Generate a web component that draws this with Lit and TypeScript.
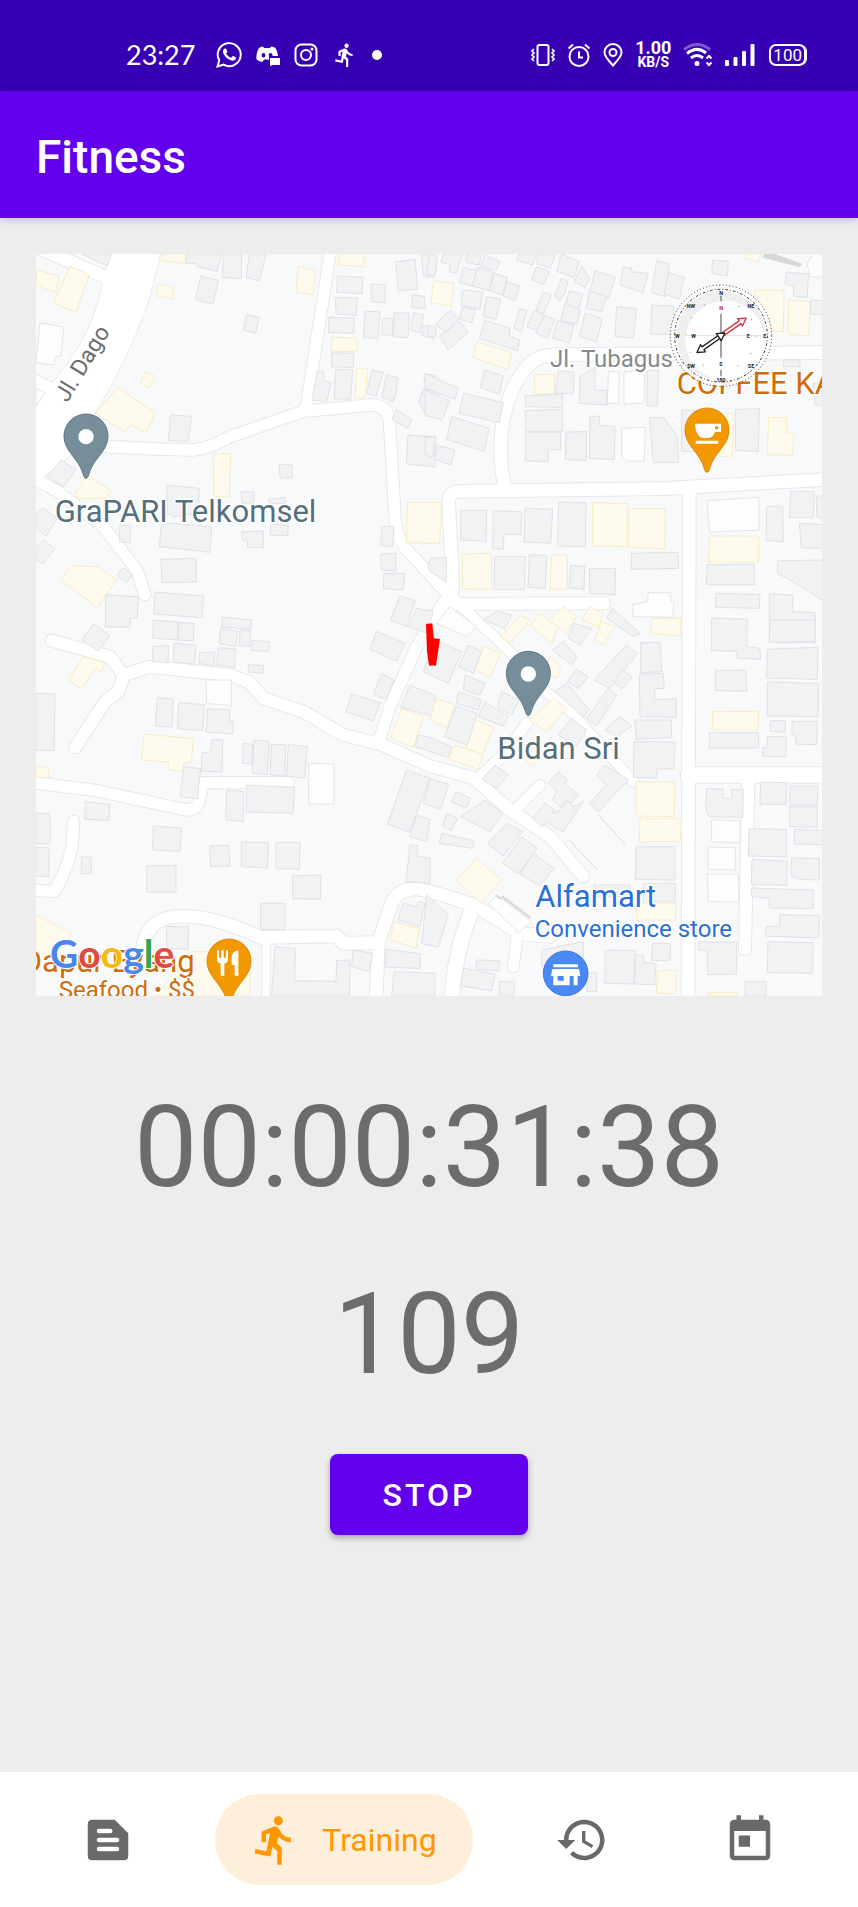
import { LitElement, html, css, svg } from "lit";
import { customElement, property } from "lit/decorators.js";

type Kind = "g" | "y" | "w" | "d";
type Block = { x: number; y: number; shapes: Partial<Record<Kind, string>> };

/* Building footprints by map quadrant; shapes of one kind are separated by "/". */
const BLOCKS: Block[] = [
  {
    x: 0, y: 0,
    shapes: {
      y: `20,60 88,78 76,128 18,105/120,48 178,75 138,186 70,160/395,12 470,12 465,40 398,32/382,102 430,110 428,146 380,138/
        805,50 858,62 848,135 798,125/928,12 1006,12 1000,50 925,44/905,262 980,264 980,304 904,304/980,355 1013,357 1005,443 975,442/
        1132,757 1234,757 1229,880 1129,878/345,365 374,378 358,414 332,400/265,412 376,490 348,548 305,524 285,545 195,490/
        550,612 602,612 598,740 552,740/170,675 245,722 225,745 150,745 132,738/125,948 205,950 258,990 232,1030 202,1072 92,990`,
      g: `155,12 245,12 232,48/470,12 575,12 560,64 500,48 498,40 468,40/580,12 635,12 634,86 577,82/658,12 708,12 688,93 648,82/
        512,78 566,92 548,163 497,148/650,193 687,203 677,250 640,240/922,78 998,82 997,131 920,127/1023,102 1065,104 1066,158 1024,155/
        1098,36 1155,28 1163,118 1104,122/1175,12 1210,12 1210,82 1180,80/1148,134 1184,140 1186,176 1145,172/917,142 982,144 978,196 918,192/
        897,202 973,204 971,250 895,248/1005,183 1050,186 1044,266 1001,262/1057,206 1090,206 1088,256 1056,254/1092,188 1138,190 1134,263 1090,260/
        1152,188 1182,196 1170,248 1142,240/1180,226 1215,232 1210,266 1176,256/905,308 972,310 970,352 904,350/
        862,363 880,366 882,392 904,398 890,456 846,450/917,358 968,360 962,448 912,446/1026,360 1060,368 1038,438 1010,430/
        1070,373 1105,384 1098,415 1102,420 1090,455 1055,442/1190,372 1215,376 1215,410 1180,396/1180,416 1215,425 1215,500 1190,498 1166,455/
        1100,478 1146,510 1132,535 1085,508/1134,555 1215,560 1215,650 1129,642/422,495 484,499 474,575 415,571/748,643 786,643 786,684 750,684/
        94,630 138,660 100,710 50,678/410,706 508,715 505,790 430,800 412,790/633,725 672,725 670,760 636,760/715,748 765,742 768,760 720,760/
        395,818 545,830 540,907 388,890/722,822 775,826 773,857 720,855/636,845 700,843 700,893 653,892 652,872 636,868/
        270,825 302,827 300,878 268,875/40,775 82,805 48,858 18,835 18,790/40,868 74,896 38,942 18,930 18,892/280,953 308,975 290,998 260,978/
        393,928 498,925 498,996 396,997/227,1035 325,1040 322,1104 302,1104 300,1132 226,1130/375,1026 521,1038 517,1103 372,1092/
        1055,828 1092,830 1088,890 1052,886/1052,912 1098,910 1097,963 1054,960/1062,970 1124,970 1120,1020 1060,1016/
        1110,1038 1156,1052 1130,1130 1082,1110/1160,1075 1210,1085 1190,1150 1135,1130`,
      w: `30,218 102,232 92,318 78,320 70,345 18,338/18,415 45,428 18,470`,
    },
  },
  {
    x: 1200, y: 0,
    shapes: {
      y: `12,92 72,100 62,168 2,158/142,275 244,308 232,358 128,322/945,12 992,12 985,36 940,24/975,120 1062,122 1060,245 975,240/
        1075,150 1140,155 1136,258 1075,252/313,374 374,374 372,432 315,432/865,490 910,490 908,618 870,620/
        1016,502 1070,504 1070,550 1092,552 1088,616 1012,614/488,758 592,760 590,890 488,888/598,776 706,776 704,896 595,892/
        97,912 185,910 184,1018 98,1016/364,915 412,916 412,1018 360,1016/838,858 986,858 986,936 836,936/
        270,1095 300,1110 240,1180 212,1160/330,1090 385,1130 365,1180 300,1125/400,1070 440,1100 410,1150 355,1110/
        480,1070 520,1090 505,1130 455,1110/515,1115 555,1130 520,1185 495,1170/665,1105 752,1106 752,1158 662,1150`,
      g: `40,12 98,12 88,40 80,70 58,65 60,45 32,36/0,12 22,18 15,78 -12,74/110,12 155,12 148,45 108,36/165,15 210,35 198,60 152,50/
        268,12 320,12 308,45 258,30/100,52 140,62 128,108 88,98/142,52 190,65 178,122 128,108/192,70 232,82 218,135 178,122/
        230,95 270,108 255,152 220,138/325,12 378,12 360,55 320,40/320,50 358,65 340,104 305,88/395,12 448,35 432,82 380,64/
        455,50 480,85 465,112 432,95/395,85 413,95 405,130 388,152 374,138/98,120 158,126 150,178 92,165/170,140 212,148 198,208 158,198/
        98,170 138,180 125,218 88,208/62,180 88,208 45,245 16,222/90,215 115,245 55,300 28,258/-5,226 18,232 15,262 -8,258/
        340,126 365,135 340,192 318,180/418,122 458,132 445,180 405,168/405,160 452,180 440,222 392,212/382,212 432,225 418,278 368,265/
        338,195 375,208 352,265 318,250/312,180 345,195 318,240 290,230/268,176 290,182 275,245 252,235/495,62 556,82 535,145 480,125/
        478,122 530,140 515,185 468,175/465,190 517,205 500,275 448,260/165,210 240,235 238,258 270,270 262,302 148,265/
        580,50 605,55 602,65 655,70 638,128 570,105/680,32 718,42 705,140 665,128/715,68 762,82 748,148 703,132/560,170 620,176 610,264 555,260/
        665,165 730,168 735,255 662,252/848,30 895,34 892,78 845,70/1068,66 1135,72 1132,142 1092,140 1090,108 1066,102/
        1142,150 1180,152 1180,195 1142,192/165,360 220,378 208,432 150,412/100,430 220,458 208,518 88,490/65,500 178,535 162,604 50,568/
        -15,370 85,415 75,448 -15,415/-15,420 60,452 35,510 -15,495/-15,560 18,562 8,622 -15,615/22,586 75,600 62,645 14,628/
        385,362 432,366 430,430 375,430/286,438 398,432 398,472 286,470/286,482 398,478 398,545 286,545/
        286,547 392,547 392,598 355,600 355,635 286,633/450,380 495,352 495,420 530,422 530,465 448,460/652,362 686,360 682,468 650,468/
        408,546 470,545 468,632 406,628/480,500 508,498 508,526 555,530 553,628 478,626/658,502 700,502 742,560 746,638 670,638/
        755,480 830,485 820,605 755,604/917,478 988,476 985,604 916,602/92,782 170,780 168,874 92,870/
        190,782 275,786 273,854 222,852 220,898 188,896/285,774 368,778 362,880 282,876/386,756 468,758 466,890 382,888/
        194,920 286,920 284,1018 192,1018/298,914 350,916 346,1015 294,1012/422,945 464,950 462,1018 418,1014/478,955 557,956 555,1034 480,1032/
        604,910 745,907 745,955 604,958/832,944 973,943 973,1004 828,1004/1082,724 1152,724 1150,802 1078,802/
        1010,770 1058,770 1060,875 1008,872/1160,738 1180,738 1180,808 1160,800/1108,820 1180,824 1180,895 1114,893/
        1042,932 1180,930 1180,1052 1080,990 1042,970/858,1030 990,1034 988,1075 856,1072/1018,1032 1088,1035 1088,1085 1156,1088 1156,1178 1018,1176/
        0,925 50,922 48,996 -5,960/845,1105 952,1107 950,1190 990,1195 992,1228 922,1225 920,1204 845,1202/
        200,1085 245,1095 225,1135 160,1110/545,1075 630,1150 610,1160 530,1105/1060,330 1110,330 1110,350 1060,350/1150,400 1180,400 1180,465 1155,465`,
      w: `1150,12 1180,12 1180,82 1140,80 1130,40/535,365 568,365 566,462 532,460/582,365 645,362 642,460 582,462/
        575,535 646,532 643,633 590,634 575,620/832,752 986,742 988,840 838,846/
        655,1028 722,1028 722,1055 732,1058 728,1102 610,1100 606,1065 652,1055/60,1070 140,1130 110,1160 20,1120`,
      d: `1002,12 1030,12 1115,42 1108,50 1000,22`,
    },
  },
  {
    x: 0, y: 1110,
    shapes: {
      y: `160,110 225,128 215,155 195,148 155,206 115,180/18,438 55,442 55,474 18,472/
        343,342 490,356 484,425 462,430 460,456 416,448 415,426 334,420/18,885 125,940 110,975 18,1040/480,995 660,995 660,1128 380,1128/
        1092,905 1168,925 1158,985 1080,960/1115,265 1180,290 1150,382 1082,355`,
      g: `192,10 240,48 205,92 155,60/18,220 75,222 72,392 18,390/370,0 445,6 443,60 368,54/447,8 492,10 490,62 443,60/577,-8 665,0 662,28 575,20/
        572,24 622,34 618,80 568,70/630,30 662,32 660,80 628,76/668,60 718,66 715,95 664,90/368,80 416,76 414,128 368,124/
        432,70 498,76 494,132 430,126/508,98 554,96 552,138 506,130/566,84 616,86 614,142 560,136/656,134 700,136 700,160 654,156/
        382,233 430,238 426,322 376,318/446,248 523,254 518,332 443,326/533,266 600,270 598,302 610,304 608,342 528,336/
        545,358 578,360 576,456 514,454 516,398 542,396/462,440 512,446 502,536 450,530/640,370 668,374 664,432 638,430/
        672,360 718,364 712,464 666,460/725,373 767,374 764,468 720,464/775,374 832,380 824,474 770,468/650,495 793,502 790,580 648,576/
        590,510 640,515 640,606 588,600/166,545 240,553 236,602 164,598/18,580 58,580 62,628 60,672 18,670/18,682 58,684 56,770 18,768/
        154,710 184,712 184,762 154,760/370,618 455,624 450,694 368,690/350,738 438,736 438,816 350,816/540,678 596,676 600,738 542,740/
        634,666 715,668 712,744 634,740/738,668 810,668 808,748 738,746/788,768 872,764 872,838 788,836/692,850 766,850 766,930 692,928/
        410,920 476,920 474,988 410,986/735,980 796,985 794,1082 918,1084 920,1022 960,1020 958,1128 725,1128/970,990 1028,1000 1018,1055 965,1040/
        1120,850 1160,860 1165,845 1185,850 1170,920 1104,900/1068,988 1172,1002 1170,1045 1066,1042/1092,1055 1215,1060 1215,1128 1085,1128/
        1040,34 1125,70 1100,124 1020,88/1055,160 1092,180 1070,240 1030,222/965,222 1050,248 1030,302 948,276/
        1140,196 1215,225 1215,290 1112,262/1165,345 1200,352 1265,380 1255,412 1155,380/1130,450 1200,475 1138,636 1072,612/
        1160,585 1200,598 1190,665 1138,650/1140,675 1162,676 1162,708 1200,715 1200,790 1128,786/1200,476 1256,492 1232,568 1180,550/
        1190,825 1255,885 1225,982 1175,970`,
      w: `528,180 604,180 604,257 530,250/836,430 912,432 912,553 836,552`,
    },
  },
  {
    x: 1200, y: 1110,
    shapes: {
      y: `160,78 212,100 180,172 135,150/18,235 75,255 50,325 0,300/130,298 190,320 158,405 106,380/75,375 158,405 145,448 58,418/
        370,235 410,265 350,335 298,300/280,400 330,420 300,440/617,486 735,486 732,590 617,588/630,596 755,596 752,664 628,666/
        620,850 738,850 736,900 620,900/848,275 986,274 984,330 848,330/682,1052 738,1052 738,1120 680,1120/140,715 215,780 152,850 80,780/
        360,110 392,140 380,175 345,160/835,1118 920,1118 920,1128 835,1128`,
      g: `15,60 95,95 55,190 -20,155/115,75 155,95 130,160 85,140/105,165 165,190 150,225 100,210/85,215 155,240 145,270 80,250/
        78,258 142,280 112,375 44,350/215,215 268,240 245,285 202,262/165,245 235,290 220,318 145,290/400,65 440,110 425,135 368,90/
        430,10 485,25 450,75 415,55/590,75 622,100 540,205 492,180/440,148 475,170 445,205 412,185/580,150 606,172 575,208 550,185/
        410,190 478,270 460,292 375,215/535,205 560,225 500,318 470,295/425,295 470,330 440,380 385,345/568,290 605,318 560,350 525,330/
        195,435 235,465 200,505 155,478/385,455 412,480 405,490 445,525 400,570 368,540 380,515 355,490/
        345,550 375,570 365,580 392,570 410,540 432,560 460,545 400,635 352,610 335,620 308,595/525,435 595,480 505,575 478,550 530,495 500,465/
        632,68 692,68 695,155 632,158/628,162 700,160 702,205 674,206 674,238 740,236 738,292 630,290/615,300 725,300 725,352 618,358/
        612,365 735,366 732,445 680,448 680,474 610,472/618,680 735,680 735,780 616,778/640,790 736,790 736,845 640,845/
        1020,0 1156,0 1156,66 1018,66/1012,88 1164,82 1162,178 1010,174/1012,186 1166,190 1164,290 1012,288/856,152 948,150 950,214 856,212/
        838,338 986,338 986,384 838,384/1022,302 1066,302 1066,336 1020,334/1086,304 1162,304 1160,374 1098,372 1096,345 1086,344/
        1012,350 1068,350 1068,410 998,410 998,384 1012,382/830,505 880,508 880,535 905,535 905,508 940,508 938,592 838,590 828,572/
        992,486 1070,488 1068,553 990,553/1080,498 1164,498 1162,555 1080,554/1078,560 1162,560 1162,622 1078,620/
        957,626 1070,628 1070,710 955,708/1094,628 1180,632 1180,674 1092,672/966,718 1072,724 1070,796 964,794/
        1085,714 1168,716 1168,780 1110,778 1082,768/965,804 1150,810 1150,866 1018,864 1016,835 965,830/
        1050,884 1168,886 1166,954 1006,948 1008,920 1048,918/1014,965 1150,968 1148,1060 1012,1058/805,965 920,967 920,1062 832,1064 832,990 805,990/
        945,1085 1008,1085 1008,1128 945,1128/668,970 722,970 720,1022 664,1022/526,990 616,992 612,1092 524,1090/
        616,1005 640,1006 640,1028 678,1030 674,1094 614,1092/475,1058 500,1058 500,1115 470,1115/140,1020 208,1022 206,1052 138,1048/
        100,1045 195,1062 185,1112 92,1098/208,1085 254,1085 252,1128 208,1128/80,515 122,535 108,565 64,545/165,540 218,580 180,635 92,590/
        50,580 82,595 65,632 38,618/35,640 132,662 128,685 28,670/232,610 278,635 220,708 172,670/275,650 322,685 265,762 218,730/
        310,700 372,745 330,798 270,762/490,795 600,795 598,830 500,830/335,990 460,965 460,1020 335,1040`,
      w: `845,600 930,602 930,668 845,665/835,682 916,682 916,750 835,748/832,762 926,762 926,846 835,845/200,825 305,905 265,938 175,850`,
      d: `218,828 302,892 300,895 216,832/200,825 214,835 212,838 198,828`,
    },
  },
];

const ROADS: Array<[number, string]> = [
  [38, "M40,0 L235,85"],
  [38, "M10,392 L80,425"],
  [34, "M200,588 L380,597 L490,600 Q540,595 600,560 L820,484 L1020,465 Q1072,465 1078,510 L1095,800 Q1098,870 1140,910 L1220,995 L1290,1065"],
  [30, "M1220,1000 L1440,1205 L1550,1330 L1600,1360 L1810,1595"],
  [34, "M902,0 L828,478"],
  [38, "M2390,308 L1580,314 Q1510,315 1475,370 Q1410,470 1412,600 Q1412,660 1425,712"],
  [38, "M2390,688 L1900,716 L1290,724 Q1255,724 1256,760 L1268,1000 Q1268,1040 1240,1060 L1200,1150"],
  [36, "M1270,1062 L1722,1060"],
  [38, "M1978,720 L1974,2250"],
  [46, "M1975,1575 L2390,1575"],
  [36, "M2155,1590 L2145,2098"],
  [34, "M10,685 L80,722 L220,830 Q290,920 320,960 L345,1034"],
  [36, "M66,1172 L240,1220 L280,1275 L360,1250 L600,1275 L660,1298 L700,1345 L820,1385 L940,1455 L1050,1482 L1200,1548 L1330,1584 L1440,1680 L1560,1760 L1660,1880"],
  [36, "M280,1280 L265,1325 L225,1355 L136,1492"],
  [34, "M1240,1060 L1160,1190 L1080,1370 L1045,1480"],
  [34, "M0,1597 L200,1622 L470,1680 Q505,1680 510,1640 L520,1598 L775,1598"],
  [34, "M131,1714 L126,1790 Q115,1850 74,1924 L0,1920"],
  [38, "M337,2100 Q345,2000 460,1998 Q560,2000 690,2062 L920,2058 L940,2080 L1040,2078"],
  [38, "M1038,2250 L1045,2078 L1085,1960 Q1105,1916 1160,1916 L1220,1930 L1330,1965 L1470,2050 L1560,2060"],
  [44, "M1325,1985 Q1275,2100 1265,2250"],
  [32, "M1450,2150 L1462,2050"],
  [22, "M708,2070 L708,2250"],
  [30, "M1530,1605 L1455,1680"],
  [32, "M1490,1420 L1435,1500 L1345,1585"],
];

const AVENUE = "M245,0 L392,0 Q370,110 345,180 Q300,310 195,490 L140,600 L40,682 L0,720 L0,470 L45,425 L75,390 C150,300 205,200 220,85 Z";

const pin = (x: number, y: number, fill: string, edge: string, glyph: unknown) => svg`
  <g transform="translate(${x} ${y})">
    <path fill=${fill} stroke=${edge} stroke-width="3"
      d="M0,125 C-4,125 -6,120 -8,114 C-22,62 -66,46 -66,-2 A66,66 0 0 1 66,-2 C66,46 22,62 8,114 C6,120 4,125 0,125 Z"></path>
    ${glyph}
  </g>`;

const RUN = "M13.49 5.48c1.1 0 2-.9 2-2s-.9-2-2-2-2 .9-2 2 .9 2 2 2zm-3.6 13.9l1-4.4 2.1 2v6h2v-7.5l-2.1-2 .6-3c1.3 1.5 3.3 2.5 5.5 2.5v-2c-1.9 0-3.5-1-4.3-2.4l-1-1.6c-.4-.6-1-1-1.7-1-.3 0-.5.1-.8.1l-5.2 2.2v4.7h2v-3.4l1.8-.7-1.6 8.1-4.9-1-.4 2 7 1.4z";

@customElement("status-bar")
class StatusBar extends LitElement {
  static styles = css`
    :host {
      display: flex;
      justify-content: space-between;
      align-items: center;
      height: 91px;
      padding: 18px 52px 0 126px;
      box-sizing: border-box;
      background: #3700b3;
      color: #fff;
      font-family: Lato, "Liberation Sans", sans-serif;
    }
    .side { display: flex; align-items: center; }
    .left { gap: 14px; }
    .right { gap: 12px; }
    .clock { font-size: 27px; line-height: 32px; margin-right: 7px; }
    svg { display: block; flex: none; fill: none; stroke: #fff; }
    .solid { fill: #fff; stroke: none; }
    .rate {
      font-family: Roboto, sans-serif;
      font-weight: 700;
      font-size: 18px;
      line-height: 15px;
      text-align: center;
    }
    .rate small { display: block; font-size: 14px; line-height: 14px; }
    .battery {
      font-family: Roboto, sans-serif;
      font-size: 17px;
      line-height: 18px;
      padding: 0 2px;
      border: 2px solid #fff;
      border-radius: 7px;
      margin-left: 2px;
      font-weight: 400;
      box-shadow: 2px 0 0 -1px #fff;
    }
  `;
  render() {
    return html`
      <div class="side left">
        <time class="clock">23:27</time>
        <svg width="26" height="26" viewBox="0 0 24 24" aria-hidden="true">
          <path stroke-width="1.8" d="M1.4 22.6 L3 16.9 A10.6 10.6 0 1 1 7 20.9 Z"></path>
          <path class="solid" transform="translate(.4 -.4)" d="M17.472 14.382c-.297-.149-1.758-.867-2.03-.967-.273-.099-.471-.148-.67.15-.197.297-.767.966-.94 1.164-.173.199-.347.223-.644.075-.297-.15-1.255-.463-2.39-1.475-.883-.788-1.48-1.761-1.653-2.059-.173-.297-.018-.458.13-.606.134-.133.298-.347.446-.52.149-.174.198-.298.298-.497.099-.198.05-.371-.025-.52-.075-.149-.669-1.612-.916-2.207-.242-.579-.487-.5-.669-.51-.173-.008-.371-.01-.57-.01-.198 0-.52.074-.792.372-.272.297-1.04 1.016-1.04 2.479 0 1.462 1.065 2.875 1.213 3.074.149.198 2.096 3.2 5.077 4.487.709.306 1.262.489 1.694.625.712.227 1.36.195 1.871.118.571-.085 1.758-.719 2.006-1.413.248-.694.248-1.289.173-1.413-.074-.124-.272-.198-.57-.347z"></path>
        </svg>
        <svg class="solid" width="24" height="26" viewBox="0 0 24 26" aria-hidden="true">
          <path fill-rule="evenodd" d="M7 4.5 L8 6 H14 L15 4.5 C17 4.7 18.5 5.3 19.5 6.2 C21 8.7 21.8 11 22 14 H13 V19 L12.5 17.5 H8 L6.5 20 C4 19.5 2 18.6 .4 17.2 C.2 13 1 9.5 2.8 6.2 C4 5.3 5.5 4.7 7 4.5 Z M7.5 11 A1.9 2.2 0 1 0 7.5 15.4 A1.9 2.2 0 1 0 7.5 11 Z M14.5 11 A1.9 2.2 0 0 0 13 14 H16.4 A1.9 2.2 0 0 0 14.5 11 Z"></path>
          <path d="M14 16 H24 V23 H17 L14 24 Z"></path>
        </svg>
        <svg width="24" height="24" viewBox="0 0 24 24" stroke-width="2" aria-hidden="true">
          <rect x="1.5" y="1.5" width="21" height="21" rx="6"></rect>
          <circle cx="12" cy="12" r="5"></circle>
          <circle class="solid" cx="18" cy="6" r="1.5"></circle>
        </svg>
        <svg class="solid" width="26" height="26" viewBox="0 0 24 24" aria-hidden="true"><path d=${RUN}></path></svg>
        <svg class="solid" width="10" height="10" viewBox="0 0 10 10" aria-hidden="true"><circle cx="5" cy="5" r="5"></circle></svg>
      </div>
      <div class="side right">
        <svg width="24" height="22" viewBox="0 0 24 22" stroke-width="2" aria-hidden="true">
          <rect x="6.500" y="1" width="11" height="20" rx="2"></rect>
          <path stroke-width="1.600" d="M3 5 L1 7 L3 9 L1 11 L3 13 L1 15 L3 17 M21 5 L23 7 L21 9 L23 11 L21 13 L23 15 L21 17"></path>
        </svg>
        <svg width="24" height="24" viewBox="0 0 24 24" stroke-width="2" aria-hidden="true">
          <circle cx="12" cy="13.500" r="9.500"></circle>
          <path d="M12 8.500 V14.500 H16 M1.500 5.500 L6 1.500 M22.500 5.500 L18 1.500"></path>
        </svg>
        <svg width="20" height="24" viewBox="0 0 20 24" stroke-width="2" aria-hidden="true">
          <path d="M10 22.500 C5 17 1.500 13.500 1.500 9.500 A8.500 8.500 0 0 1 18.500 9.500 C18.500 13.500 15 17 10 22.500 Z"></path>
          <circle cx="10" cy="9.500" r="3.500"></circle>
        </svg>
        <div class="rate">1.00<small>KB/S</small></div>
        <svg width="30" height="24" viewBox="0 0 30 24" aria-hidden="true">
          <g stroke-width="3">
            <path opacity=".35" d="M1 6.500 Q14 -3.500 27 6.500"></path>
            <path d="M4 10.500 Q14 2.500 23 10"></path>
            <path d="M8 15 Q14 10 20 15"></path>
          </g>
          <circle class="solid" cx="14" cy="20.500" r="2.500"></circle>
          <path stroke-width="2" d="M23.500 15.500 L26 13 L28.500 15.500 M23.500 19.500 L26 22 L28.500 19.500"></path>
        </svg>
        <svg class="solid" width="30" height="24" viewBox="0 0 30 24" aria-hidden="true">
          <rect x="0" y="17" width="4" height="6" rx="1"></rect><rect x="8.500" y="14" width="4" height="9" rx="1"></rect>
          <rect x="17" y="8" width="4" height="15" rx="1"></rect><rect x="25.500" y="1" width="4" height="22" rx="1"></rect>
        </svg>
        <div class="battery">100</div>
      </div>
    `;
  }
}

@customElement("route-map")
class RouteMap extends LitElement {
  static styles = css`
    :host { display: block; }
    .map { display: block; width: 100%; height: auto; background: #f8f9fb; font-family: Roboto, "Liberation Sans", sans-serif; }
    .g { fill: #f1f2f4; stroke: #dfe1e4; }
    .y { fill: #fefbee; stroke: #f7ecc6; }
    .w { fill: #fcfdfd; stroke: #e3e5e8; }
    .d { fill: #d5d7d8; stroke: #d5d7d8; }
    .building { stroke-width: 3; }
    .casing { fill: none; stroke: #e6e8eb; stroke-linecap: round; stroke-linejoin: round; }
    .road { fill: none; stroke: #fff; stroke-linecap: round; stroke-linejoin: round; }
    .avenue { fill: #fff; }
    .label { stroke: #fff; stroke-width: 9px; stroke-linejoin: round; paint-order: stroke; }
    .place { font-size: 93px; fill: #566f7a; }
    .food { font-size: 93px; fill: #cf6c0c; }
    .shop { font-size: 93px; fill: #2b6fd6; }
    .kind { font-size: 72px; }
    .street { font-size: 72px; fill: #85898c; }
    .main { font-size: 69px; fill: #6b6e70; }
    .google { font-family: Lato, sans-serif; font-weight: 700; font-size: 117px; stroke: #fff; stroke-width: 6px; paint-order: stroke; }
    .blue { fill: #4a86ec; }
    .red { fill: #e04b41; }
    .yellow { fill: #f6b912; }
    .green { fill: #37a455; }
    .track { fill: none; stroke: #f00; stroke-width: 18; stroke-linejoin: bevel; }
    .rose { font-size: 16px; font-weight: 700; text-anchor: middle; fill: #222; }
  `;

  private buildings() {
    return BLOCKS.map((b) => svg`<g transform="translate(${b.x} ${b.y})">${Object.entries(b.shapes).map(([kind, list]) =>
      list!.split("/").map((p) => svg`<polygon class="building ${kind}" points=${p.trim()}></polygon>`))}</g>`);
  }

  private compass() {
    return svg`
      <g transform="translate(2073 257)">
        <circle r="150" fill="#fff" fill-opacity=".9"></circle>
        <circle r="134" fill="#efefef"></circle>
        <circle cx="12" cy="14" r="119" fill="#fff"></circle>
        <g fill="none" stroke="#333">
          <circle r="152" stroke-width="3" stroke-dasharray="3 7"></circle>
          <circle r="139" stroke-width="3" stroke-dasharray="8 6 3 6"></circle>
          <circle r="104" stroke="#bbb" stroke-width="6" stroke-dasharray="3 51.5"></circle>
        </g>
        <path stroke="#ccc" stroke-width="2" d="M-100,0 H120"></path>
        <path stroke="#777" stroke-width="4" d="M0,-66 V66 M0,-120 V-104 M0,104 V122"></path>
        <g class="rose">
          <text x="0" y="-122">N</text><text x="131" y="6">E</text><text x="0" y="138">180</text><text x="-131" y="6">W</text>
          <text x="-90" y="-84">NW</text><text x="90" y="-84">NE</text><text x="90" y="98">SE</text><text x="-90" y="98">SW</text>
          <text x="-82" y="6">W</text><text x="82" y="6">E</text><text x="0" y="90">S</text><text x="0" y="-76" fill="#b22">N</text>
        </g>
        <g transform="rotate(55)" stroke-width="4" fill="#fff" stroke-linejoin="round">
          <path stroke="#d32f3f" d="M-5,0 V-70 H-13 L0,-92 L13,-70 H5 V0 Z"></path>
          <path stroke="#222" d="M-5,0 V66 H-13 L0,88 L13,66 H5 V0 Z"></path>
          <path stroke="#222" d="M-13,8 L0,-14 L13,8 Z"></path>
        </g>
      </g>`;
  }

  render() {
    const dot = svg`<circle r="23" fill="#fff"></circle>`;
    return html`
      <svg class="map" viewBox="18 12 2358 2226" role="img" aria-label="Training route map">
        <path class="casing" stroke-width="5" d=${AVENUE}></path>
        ${ROADS.map(([w, d]) => svg`<path class="casing" stroke-width=${w + 6} d=${d}></path>`)}
        <path class="avenue" d=${AVENUE}></path>
        ${ROADS.map(([w, d]) => svg`<path class="road" stroke-width=${w} d=${d}></path>`)}
        ${this.buildings()}
        <path stroke="#d9dbdd" stroke-width="3" fill="none" d="M1618,1770 L1702,1860 M1705,1695 L1785,1782"></path>

        <text class="label street main" transform="translate(112 460) rotate(-59)">Jl. Dago</text>
        <text class="label street" x="1560" y="352">Jl. Tubagus Ismail V</text>
        <text class="label food" x="1940" y="432">COFFEE KAWA</text>
        <text class="label place" x="74" y="815">GraPARI Telkomsel</text>
        <text class="label place" x="1402" y="1528">Bidan Sri</text>
        <text class="label shop" x="1516" y="1971">Alfamart</text>
        <text class="label shop kind" x="1514" y="2062">Convenience store</text>
        <text class="label food" x="-25" y="2165">Dapur Eyang</text>
        <text class="label food kind" x="86" y="2244">Seafood • $$</text>

        ${pin(168, 560, "#758e9a", "#5f7782", dot)}
        ${pin(1495, 1272, "#758e9a", "#5f7782", dot)}
        ${pin(2031, 542, "#f29900", "#d98a0e", svg`
          <path fill="#fff" fill-rule="evenodd" d="M-36,-21 H42 V4 H24 Q18,22 2,22 H-12 Q-34,18 -36,-21 Z M24,-13 V-4 H34 V-13 Z M-34,30 H34 V39 H-34 Z"></path>`)}
        ${pin(597, 2135, "#f29900", "#d98a0e", svg`
          <path fill="#fff" d="M-36,-34 H-30 V-12 H-23 V-34 H-16 V-12 H-9 V-34 H-3 V-8 Q-4,4 -14,6 V42 H-25 V6 Q-36,4 -36,-8 Z M28,-34 V42 H17 V10 H8 V-14 Q10,-32 28,-34 Z"></path>`)}
        <g transform="translate(1607 2170)">
          <circle r="67" fill="#4a89f3" stroke="#3f79dc" stroke-width="3"></circle>
          <path fill="#fff" fill-rule="evenodd" d="M-37,-27 H37 V-18 H-37 Z M-40,-13 H40 L44,8 H36 V36 H-37 V8 H-44 Z M-24,8 V22 H-6 V8 Z M12,8 V36 H24 V8 Z"></path>
        </g>

        <path class="track" d="M1197,1121 L1200,1205 L1206,1246 M1209,1246 L1221,1166 M1198,1121 L1210,1240"></path>
        ${this.compass()}
        <text class="google" x="60" y="2154"><tspan class="blue">G</tspan><tspan class="red">o</tspan><tspan class="yellow">o</tspan><tspan class="blue">g</tspan><tspan class="green">l</tspan><tspan class="red">e</tspan></text>
      </svg>
    `;
  }
}

@customElement("bottom-nav")
class BottomNav extends LitElement {
  static styles = css`
    :host { display: block; background: #fff; }
    nav {
      display: grid;
      grid-template-columns: 215fr auto 218fr 119fr;
      align-items: center;
      height: 135px;
      padding-right: 48px;
      box-sizing: border-box;
    }
    a { display: flex; justify-content: center; color: #696969; text-decoration: none; }
    a.active {
      align-items: center;
      gap: 20px;
      height: 91px;
      padding: 0 36px 0 33px;
      box-sizing: border-box;
      border-radius: 45px;
      background: #fdefd9;
      color: #ff9800;
      font: 400 32px/40px Roboto, "Liberation Sans", sans-serif;
    }
    svg { display: block; width: 54px; height: 54px; fill: currentColor; flex: none; }
  `;
  render() {
    return html`
      <nav aria-label="Main">
        <a href="#news" aria-label="News"><svg viewBox="0 0 24 24"><path fill-rule="evenodd" d="M5 3 H15 L21 9 V19 Q21 21 19 21 H5 Q3 21 3 19 V5 Q3 3 5 3 Z M8 7 A1 1 0 0 0 8 9 H13 A1 1 0 0 0 13 7 Z M8 11 A1 1 0 0 0 8 13 H16 A1 1 0 0 0 16 11 Z M8 15 A1 1 0 0 0 8 17 H16 A1 1 0 0 0 16 15 Z"></path></svg></a>
        <a href="#training" class="active" aria-current="page"><svg viewBox="0 0 24 24"><path d=${RUN}></path></svg>Training</a>
        <a href="#history" aria-label="History"><svg viewBox="0 0 24 24"><path d="M13 3c-4.970 0-9 4.030-9 9H1l3.890 3.890.070.140L9 12H6c0-3.870 3.130-7 7-7s7 3.130 7 7-3.130 7-7 7c-1.930 0-3.680-.790-4.940-2.060l-1.420 1.420C8.270 19.990 10.510 21 13 21c4.970 0 9-4.030 9-9s-4.030-9-9-9zm-1 5v5l4.280 2.540.720-1.210-3.500-2.080V8H12z"></path></svg></a>
        <a href="#schedule" aria-label="Schedule"><svg viewBox="0 0 24 24"><path d="M19 3h-1V1h-2v2H8V1H6v2H5c-1.110 0-1.990.9-1.990 2L3 19c0 1.100.890 2 2 2h14c1.100 0 2-.9 2-2V5c0-1.100-.9-2-2-2zm0 16H5V8h14v11zM7 10h5v5H7z"></path></svg></a>
      </nav>
    `;
  }
}

@customElement("app-root")
class AppRoot extends LitElement {
  static styles = css`
    :host {
      display: flex;
      flex-direction: column;
      min-height: 100vh;
      background: #ededed;
      font-family: Roboto, "Liberation Sans", sans-serif;
    }
    header {
      display: flex;
      align-items: center;
      height: 127px;
      padding: 4px 36px 0;
      box-sizing: border-box;
      background: #6200ee;
      color: #fff;
      box-shadow: 0 2px 8px rgba(0, 0, 0, 0.18);
    }
    h1 { margin: 0; font-size: 46px; line-height: 56px; font-weight: 500; }
    main { flex: 1; display: flex; flex-direction: column; align-items: center; padding: 36px 36px 48px; }
    route-map { align-self: stretch; margin-bottom: 84px; }
    .count { font-size: 113px; line-height: 136px; color: #6c6c6c; margin-bottom: 51px; }
    .steps { margin-bottom: 51px; }
    button {
      width: 198px;
      height: 81px;
      border: 0;
      border-radius: 8px;
      background: #6200ee;
      color: #fff;
      font: 500 32px/40px Roboto, "Liberation Sans", sans-serif;
      letter-spacing: 3px;
      box-shadow: 0 3px 6px rgba(0, 0, 0, 0.3);
    }
  `;
  @property() elapsed = "00:00:31:38";
  @property({ type: Number }) steps = 109;

  render() {
    return html`
      <status-bar></status-bar>
      <header><h1>Fitness</h1></header>
      <main>
        <route-map></route-map>
        <div class="count" role="timer">${this.elapsed}</div>
        <div class="count steps">${this.steps}</div>
        <button type="button">STOP</button>
      </main>
      <bottom-nav></bottom-nav>
    `;
  }
}
